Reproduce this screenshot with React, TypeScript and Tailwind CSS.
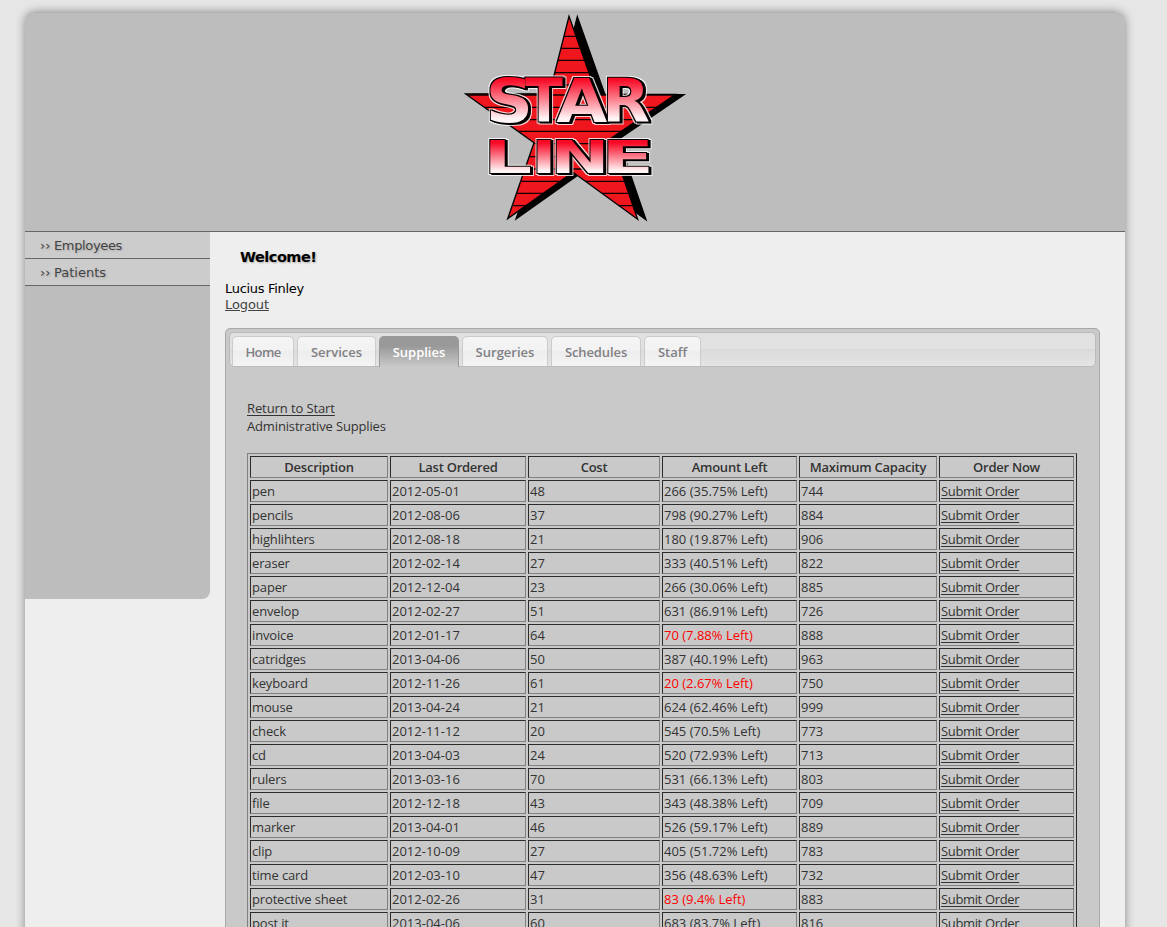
type Letter = { ch: string; x: number; sx: number };

const STAR: Letter[] = [
  { ch: "S", x: 92, sx: 1.96 },
  { ch: "T", x: 210, sx: 1.66 },
  { ch: "A", x: 304, sx: 1.98 },
  { ch: "R", x: 442, sx: 1.86 },
];
const LINE: Letter[] = [
  { ch: "L", x: 85, sx: 2.3 },
  { ch: "I", x: 229, sx: 2.05 },
  { ch: "N", x: 286, sx: 2.13 },
  { ch: "E", x: 439, sx: 2.32 },
];

function Word({ letters, baseline, sy }: { letters: Letter[]; baseline: number; sy: number }) {
  return (
    <g
      fontFamily="'DejaVu Sans', sans-serif"
      fontWeight="700"
      fontSize="100"
      fill="url(#face)"
      filter="url(#bevel)"
    >
      {letters.map((l) => (
        <text key={l.ch} transform={`translate(${l.x} ${baseline}) scale(${l.sx} ${sy})`}>
          {l.ch}
        </text>
      ))}
    </g>
  );
}

function Logo() {
  const star = "342,34 425,268 662,268 465,402 548,643 354,502 158,641 237,413 32,267 283,267";
  return (
    <svg width="240" height="218" viewBox="0 24 720 654" className="block">
      <defs>
        <clipPath id="star">
          <polygon points={star} />
        </clipPath>
        <linearGradient id="face" gradientUnits="userSpaceOnUse" x1="0" y1="-73" x2="0" y2="0">
          <stop offset="0.05" stopColor="#f80a26" />
          <stop offset="0.92" stopColor="#fff4f5" />
        </linearGradient>
        <filter id="bevel" filterUnits="userSpaceOnUse" x="0" y="0" width="720" height="675" colorInterpolationFilters="sRGB">
          <feMorphology in="SourceAlpha" operator="dilate" radius="2" result="outline" />
          <feOffset in="outline" dx="5" dy="4" result="drop" />
          <feMerge result="dark">
            <feMergeNode in="drop" />
            <feMergeNode in="outline" />
          </feMerge>
          <feMorphology in="dark" operator="dilate" radius="2.6" result="wide" />
          <feFlood floodColor="#fff" floodOpacity="0.8" />
          <feComposite in2="wide" operator="in" result="halo" />
          <feMerge>
            <feMergeNode in="halo" />
            <feMergeNode in="dark" />
            <feMergeNode in="SourceGraphic" />
          </feMerge>
        </filter>
      </defs>
      <polygon points={star} transform="translate(25 1)" fill="#000" stroke="#000" strokeWidth="4" />
      <polygon points={star} fill="#ef161e" />
      <g clipPath="url(#star)" stroke="#100" strokeWidth="4">
        {[94, 130, 166, 203, 240, 270, 307, 344, 379, 416, 455, 492, 529, 565, 602].map((y) => (
          <line key={y} x1="0" x2="720" y1={y} y2={y} />
        ))}
      </g>
      <polygon points={star} fill="none" stroke="#000" strokeWidth="4" />
      <Word letters={STAR} baseline={351} sy={1.83} />
      <Word letters={LINE} baseline={505} sy={1.32} />
    </svg>
  );
}

const TABS = [
  { label: "Home", cls: "w-[62px] tracking-[-0.6px]" },
  { label: "Services", cls: "w-[79px]" },
  { label: "Supplies", cls: "w-[80px]" },
  { label: "Surgeries", cls: "w-[86px]" },
  { label: "Schedules", cls: "w-[90px] tracking-[-0.1px]" },
  { label: "Staff", cls: "w-[57px]" },
];

const HEADS = ["Description", "Last Ordered", "Cost", "Amount Left", "Maximum Capacity", "Order Now"];

const ROWS: [string, string, string, string, string][] = [
  ["pen", "2012-05-01", "48", "266 (35.75% Left)", "744"],
  ["pencils", "2012-08-06", "37", "798 (90.27% Left)", "884"],
  ["highlihters", "2012-08-18", "21", "180 (19.87% Left)", "906"],
  ["eraser", "2012-02-14", "27", "333 (40.51% Left)", "822"],
  ["paper", "2012-12-04", "23", "266 (30.06% Left)", "885"],
  ["envelop", "2012-02-27", "51", "631 (86.91% Left)", "726"],
  ["invoice", "2012-01-17", "64", "70 (7.88% Left)", "888"],
  ["catridges", "2013-04-06", "50", "387 (40.19% Left)", "963"],
  ["keyboard", "2012-11-26", "61", "20 (2.67% Left)", "750"],
  ["mouse", "2013-04-24", "21", "624 (62.46% Left)", "999"],
  ["check", "2012-11-12", "20", "545 (70.5% Left)", "773"],
  ["cd", "2013-04-03", "24", "520 (72.93% Left)", "713"],
  ["rulers", "2013-03-16", "70", "531 (66.13% Left)", "803"],
  ["file", "2012-12-18", "43", "343 (48.38% Left)", "709"],
  ["marker", "2013-04-01", "46", "526 (59.17% Left)", "889"],
  ["clip", "2012-10-09", "27", "405 (51.72% Left)", "783"],
  ["time card", "2012-03-10", "47", "356 (48.63% Left)", "732"],
  ["protective sheet", "2012-02-26", "31", "83 (9.4% Left)", "883"],
  ["post it", "2013-04-06", "60", "683 (83.7% Left)", "816"],
];

const CELL =
  "h-[22px] border border-t-[#2b2b2b] border-l-[#2b2b2b] border-r-[#808080] border-b-[#808080] p-px leading-[18px] whitespace-nowrap";

function SupplyTable() {
  return (
    <table className="mt-[18px] w-[830px] table-fixed border-separate border-spacing-[2px] border border-t-[#808080] border-l-[#808080] border-r-[#2b2b2b] border-b-[#2b2b2b]">
      <colgroup>
        <col className="w-[138px]" />
        <col className="w-[136px]" />
        <col className="w-[132px]" />
        <col className="w-[135px]" />
        <col className="w-[138px]" />
        <col className="w-[135px]" />
      </colgroup>
      <thead>
        <tr>
          {HEADS.map((h) => (
            <th key={h} className={`${CELL} text-center font-semibold tracking-[-0.25px]`}>
              {h}
            </th>
          ))}
        </tr>
      </thead>
      <tbody>
        {ROWS.map((r) => (
          <tr key={r[0]}>
            {r.map((v, i) => (
              <td
                key={i}
                className={`${CELL} ${i === 0 ? "tracking-[-0.15px]" : ""} ${
                  i === 3 && parseFloat(v.split("(")[1]) < 10 ? "text-[#ff0000]" : ""
                }`}
              >
                {v}
              </td>
            ))}
            <td className={CELL}>
              <a className="tracking-[-0.35px] underline underline-offset-2">Submit Order</a>
            </td>
          </tr>
        ))}
      </tbody>
    </table>
  );
}

export default function App() {
  return (
    <div className="h-[927px] overflow-hidden bg-[#e6e6e6] pt-3 pl-[25px] font-['DejaVu_Sans',sans-serif] text-[13px]">
      <div className="h-[1000px] w-[1100px] rounded-t-[10px] bg-[#eeeeee] shadow-[0_0_10px_#888]">
        <header className="flex h-[220px] justify-center rounded-t-[10px] border-t border-b border-t-[#b2b2b2] border-b-[#666] bg-[#bdbdbd]">
          <Logo />
        </header>
        <div className="flex items-start">
          <nav className="h-[367px] w-[185px] rounded-br-[8px] bg-[#bdbdbd] text-[#444]">
            {["Employees", "Patients"].map((n) => (
              <a
                key={n}
                className="flex h-[27px] items-center border-b border-[#666] bg-[#cccccc] pt-[2px] pl-[15px] [text-shadow:1px_1px_2px_#aaa]"
              >
                <span className="w-[14px]">››</span>
                <span className={n === "Employees" ? "tracking-[-0.35px]" : "tracking-[0px]"}>{n}</span>
              </a>
            ))}
          </nav>
          <main className="pl-[15px]">
            <h1 className="mt-[15px] pl-[15px] text-[14.5px] leading-5 font-bold tracking-[-0.5px] text-black [text-shadow:1px_1px_2px_#aaa]">
              Welcome!
            </h1>
            <div className="mt-[14px] leading-4 text-black">
              <div className="tracking-[-0.3px]">Lucius Finley</div>
              <a className="tracking-[-0.1px] text-[#444] underline">Logout</a>
            </div>
            <section className="mt-[15px] h-[700px] w-[875px] rounded-t-[5px] border border-[#a8a8a8] bg-[#c9c9c9] p-[3px] font-['Open_Sans',sans-serif] text-[#333]">
              <div className="flex h-[35px] items-end gap-[3px] rounded-[5px] border border-[#bbb] bg-[linear-gradient(#e1e1e1_0,#e1e1e1_48%,#dadada_48%,#e4e4e4_100%)] pl-[2px] font-semibold">
                {TABS.map((t) => (
                  <div
                    key={t.label}
                    className={`${t.cls} flex shrink-0 justify-center rounded-t-[5px] border border-b-0 pt-[5px] leading-5 ${
                      t.label === "Supplies"
                        ? "-mb-px h-[31px] border-[#999] bg-[linear-gradient(#999_0,#999_30%,#c9c9c9_100%)] text-white"
                        : "h-[30px] border-[#ccc] bg-[linear-gradient(#f4f4f4_0,#f2f2f2_48%,#ededed_50%,#f4f4f4_100%)] text-[#808085]"
                    }`}
                  >
                    {t.label}
                  </div>
                ))}
              </div>
              <div className="pt-8 pl-[18px] leading-[18px]">
                <a className="tracking-[-0.1px] underline underline-offset-2">Return to Start</a>
                <div className="tracking-[-0.15px]">Administrative Supplies</div>
                <SupplyTable />
              </div>
            </section>
          </main>
        </div>
      </div>
    </div>
  );
}
